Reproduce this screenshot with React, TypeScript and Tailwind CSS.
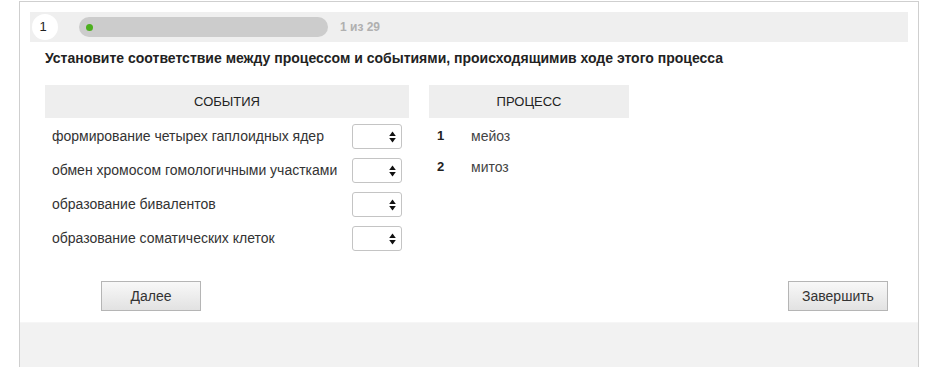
const events = [
  'формирование четырех гаплоидных ядер',
  'обмен хромосом гомологичными участками',
  'образование бивалентов',
  'образование соматических клеток',
];

const processes = [
  { n: '1', label: 'мейоз' },
  { n: '2', label: 'митоз' },
];

function SelectBox() {
  return (
    <div className="w-[50px] h-[25px] border border-[#c4c4c4] rounded-[3px] bg-white flex items-center justify-end pr-[5px]">
      <svg width="7" height="12" viewBox="0 0 7 12" className="text-[#111]">
        <path d="M3.5 0.5 L6.8 5 H0.2 Z" fill="currentColor" />
        <path d="M3.5 11.5 L6.8 7 H0.2 Z" fill="currentColor" />
      </svg>
    </div>
  );
}

export default function App() {
  return (
    <div
      className="w-[925px] h-[367px] bg-white overflow-hidden"
      style={{ fontFamily: '"Liberation Sans", Arial, sans-serif' }}
    >
      <div className="ml-[19px] w-[900px] h-[367px] mt-px border-l border-r border-t border-[#cfcfcf] flex flex-col">
        <div className="bg-white px-[10px] pt-[10px] flex-1 flex flex-col">
          {/* header bar */}
          <div className="h-[30px] bg-[#efefef] flex items-center pl-[2px]">
            <div className="w-[26px] h-[26px] rounded-full bg-white flex items-center justify-center text-[13px] text-[#222] pr-[4px]">
              1
            </div>
            <div className="ml-[21px] w-[249px] h-[20px] rounded-full bg-[#cccccc] flex items-center pl-[7px]">
              <div className="w-[7px] h-[7px] rounded-full bg-[#4caf1e]" />
            </div>
            <span className="ml-[12px] text-[12px] font-bold text-[#b0b0b0]">1 из 29</span>
          </div>

          {/* question */}
          <h1 className="mt-[8px] ml-[15px] text-[14px] font-bold text-[#222] leading-[17px]">
            Установите соответствие между процессом и событиями, происходящимив ходе этого процесса
          </h1>

          <div className="mt-[18px] ml-[15px] flex gap-[20px]">
            <div className="w-[364px]">
              <div className="h-[33px] bg-[#eeeeee] flex items-center justify-center text-[13px] text-[#222]">
                СОБЫТИЯ
              </div>
              <div className="pt-[6px] flex flex-col gap-[9px]">
                {events.map((e) => (
                  <div key={e} className="flex items-center justify-between pl-[7px] pr-[7px]">
                    <span className="text-[14px] text-[#333]">{e}</span>
                    <SelectBox />
                  </div>
                ))}
              </div>
            </div>
            <div className="w-[200px]">
              <div className="h-[33px] bg-[#eeeeee] flex items-center justify-center text-[13px] text-[#222]">
                ПРОЦЕСС
              </div>
              <div className="pt-[9px] flex flex-col gap-[13px]">
                {processes.map((p) => (
                  <div key={p.n} className="flex items-center pl-[8px] h-[18px]">
                    <span className="w-[34px] text-[13px] font-bold text-[#222]">{p.n}</span>
                    <span className="text-[14px] text-[#444]">{p.label}</span>
                  </div>
                ))}
              </div>
            </div>
          </div>

          <div className="mt-auto mb-[11px] flex justify-between pl-[71px] pr-[20px]">
            <button className="w-[100px] h-[30px] border border-[#b5b5b5] bg-gradient-to-b from-[#f8f8f8] to-[#e2e2e2] text-[14px] text-[#333]">
              Далее
            </button>
            <button className="w-[100px] h-[30px] border border-[#b5b5b5] bg-gradient-to-b from-[#f8f8f8] to-[#e2e2e2] text-[14px] text-[#333]">
              Завершить
            </button>
          </div>
        </div>
        <div className="h-[46px] bg-[#f2f2f2] border-t border-[#f6f6f6]" />
      </div>
    </div>
  );
}
